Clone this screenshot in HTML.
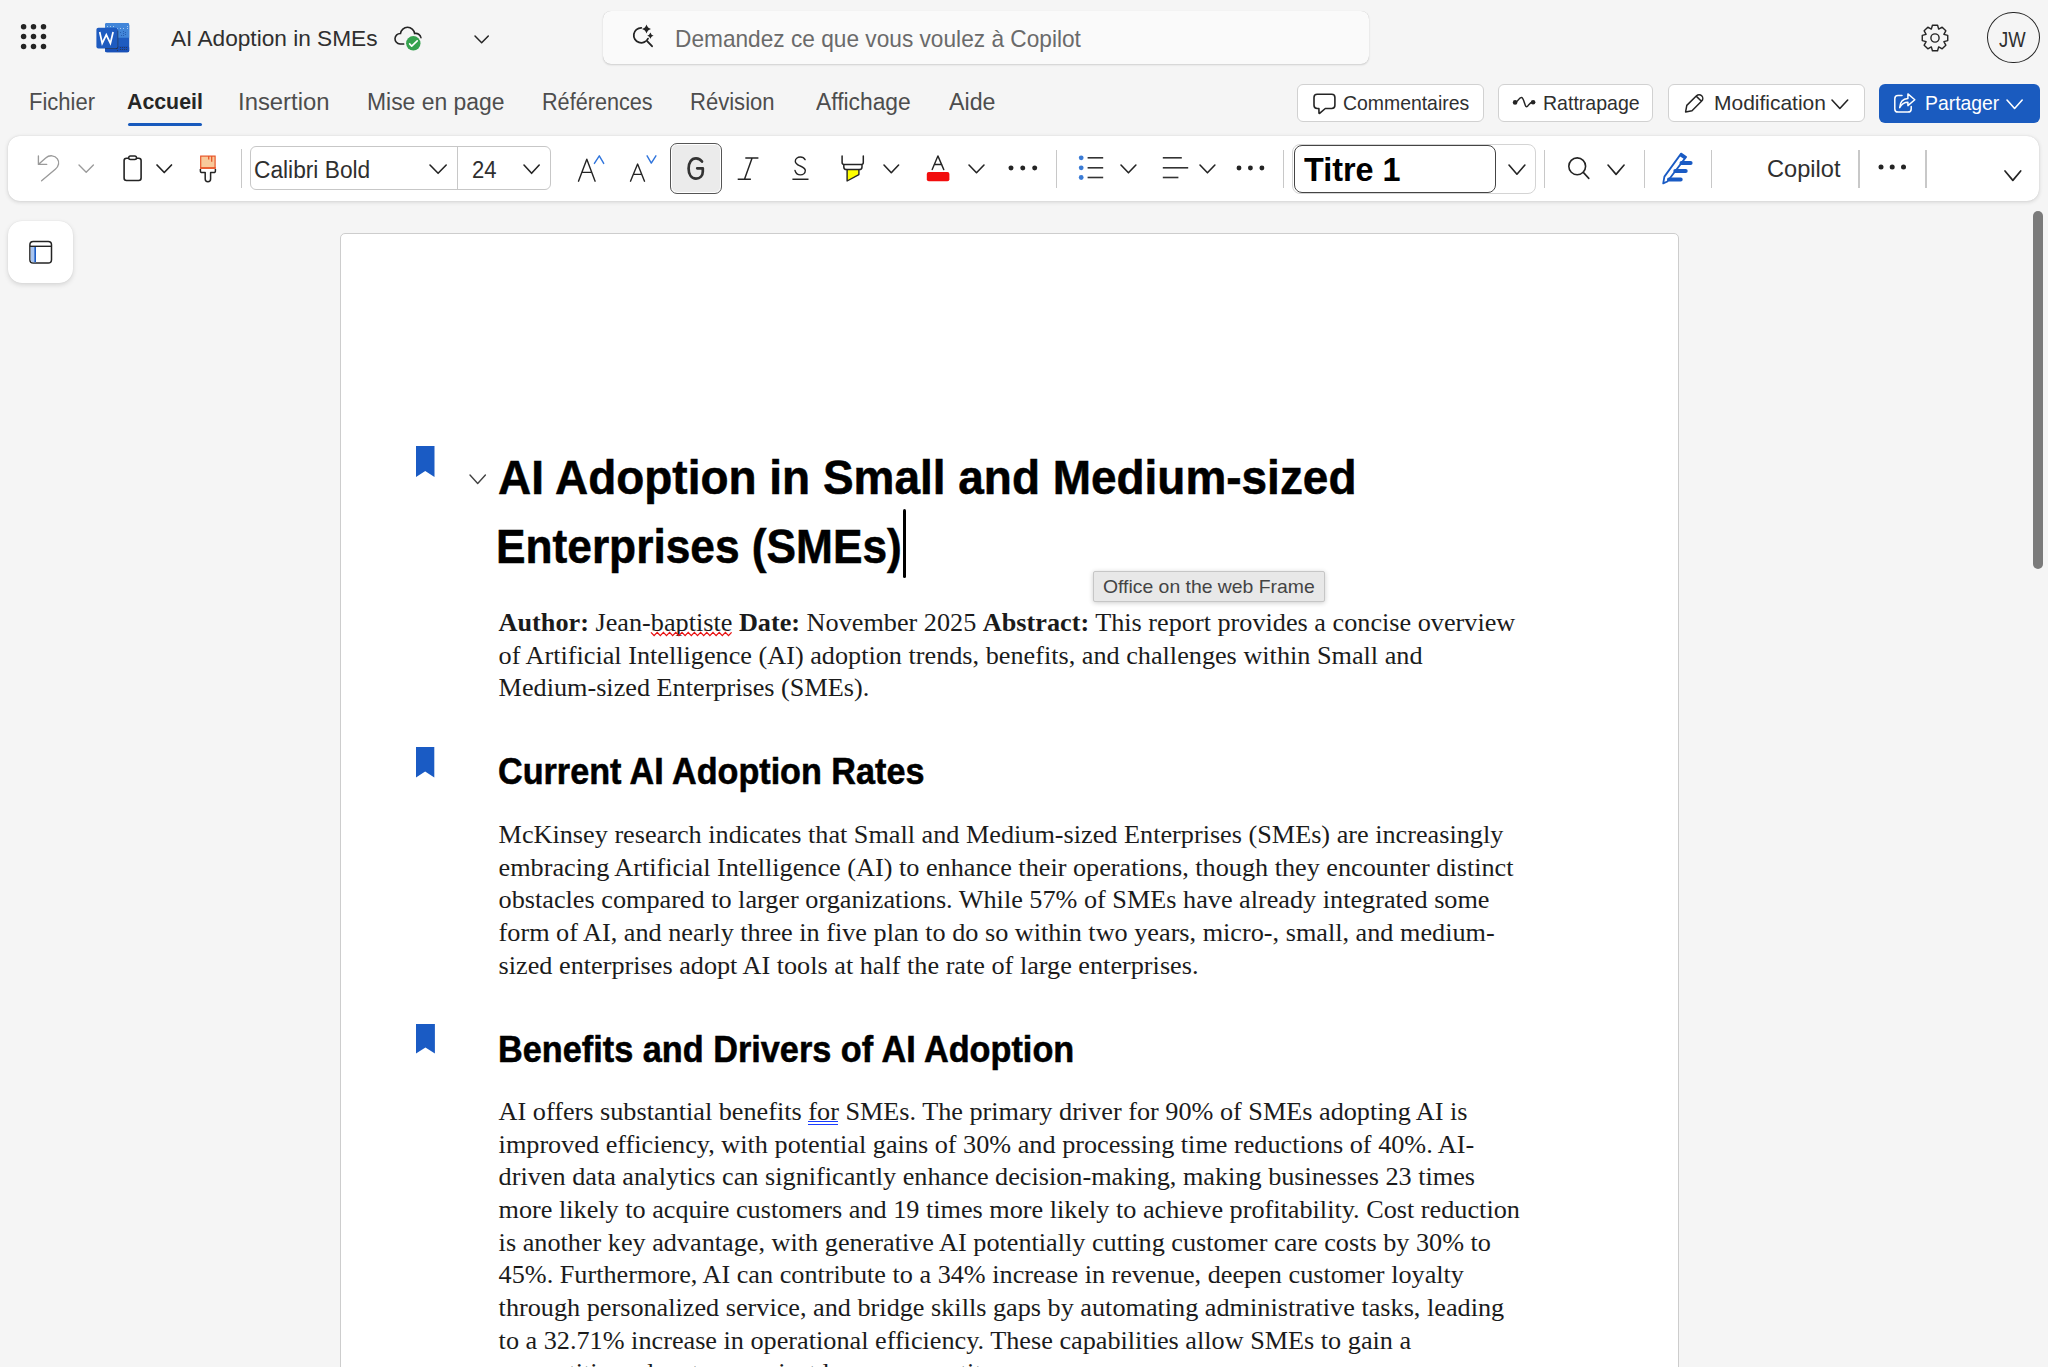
<!DOCTYPE html>
<html><head><meta charset="utf-8"><title>AI Adoption in SMEs</title>
<style>
html,body{margin:0;padding:0;}
body{width:2048px;height:1367px;overflow:hidden;position:relative;background:#f5f5f5;font-family:'Liberation Sans', sans-serif;}
.t{position:absolute;white-space:pre;}
.b{position:absolute;}
svg.b{overflow:visible;}
</style></head><body>
<svg class="b" style="left:15.00px;top:18.00px;" width="37" height="37" viewBox="0 0 37 37"><circle cx="8.6" cy="8.7" r="2.75" fill="#242424"/><circle cx="8.6" cy="18.6" r="2.75" fill="#242424"/><circle cx="8.6" cy="28.4" r="2.75" fill="#242424"/><circle cx="18.5" cy="8.7" r="2.75" fill="#242424"/><circle cx="18.5" cy="18.6" r="2.75" fill="#242424"/><circle cx="18.5" cy="28.4" r="2.75" fill="#242424"/><circle cx="28.5" cy="8.7" r="2.75" fill="#242424"/><circle cx="28.5" cy="18.6" r="2.75" fill="#242424"/><circle cx="28.5" cy="28.4" r="2.75" fill="#242424"/></svg>
<svg class="b" style="left:90.00px;top:15.00px;" width="45" height="45" viewBox="0 0 45 45">
<rect x="15" y="8.1" width="24.2" height="29.1" rx="2" fill="#1f5cc0"/>
<path d="M15 10.1 a2 2 0 0 1 2 -2 h20.2 a2 2 0 0 1 2 2 v12.6 h-24.2z" fill="#4286d9"/>
<rect x="15" y="31.3" width="24.2" height="5.9" rx="1.5" fill="#1850b8"/>
<g fill="#ffffff" opacity="0.75"><circle cx="17.5" cy="11.5" r="0.5"/><circle cx="20.5" cy="11.5" r="0.5"/><circle cx="23.5" cy="11.5" r="0.5"/><circle cx="27.5" cy="13.5" r="0.5"/><circle cx="30.5" cy="13.5" r="0.5"/><circle cx="33.5" cy="13.5" r="0.5"/><circle cx="37.5" cy="13.5" r="0.5"/><circle cx="37.5" cy="11.5" r="0.5"/></g>
<g fill="#1d4fa0" opacity="0.8"><circle cx="30.5" cy="17.5" r="0.55"/><circle cx="33.5" cy="16.5" r="0.55"/><circle cx="35.5" cy="17.5" r="0.55"/><circle cx="33.5" cy="18.5" r="0.55"/><circle cx="35.5" cy="19.5" r="0.55"/><circle cx="33.5" cy="20.5" r="0.55"/><circle cx="31.5" cy="20.5" r="0.55"/></g>
<g fill="#333" opacity="0.8"><circle cx="30.5" cy="32.5" r="0.55"/><circle cx="32.5" cy="32.5" r="0.55"/><circle cx="34.5" cy="32.5" r="0.55"/><circle cx="36.5" cy="32.5" r="0.55"/><circle cx="30.5" cy="34.5" r="0.55"/><circle cx="32.5" cy="34.5" r="0.55"/><circle cx="34.5" cy="34.5" r="0.55"/><circle cx="36.5" cy="34.5" r="0.55"/><circle cx="27.5" cy="35.5" r="0.55"/></g>
<path d="M27.6 15.5 V31.5 a2 2 0 0 1 -2 2 H15" fill="none" stroke="#2a2a2a" stroke-width="1.2"/>
<rect x="6.4" y="12.8" width="21.3" height="20.8" rx="2" fill="#1e5bc0"/>
<path d="M9.7 17 L12.2 28.3 L16.3 19.8 L20.4 28.3 L23.1 17" fill="none" stroke="#ffffff" stroke-width="1.7" stroke-linejoin="miter"/>
</svg>
<div class="t" style="left:171.20px;top:26.50px;font-family:'Liberation Sans', sans-serif;font-size:22.8px;line-height:22.8px;font-weight:400;color:#2f2f2f;transform:scaleX(0.99387);transform-origin:0 0;">AI Adoption in SMEs</div>
<svg class="b" style="left:385.00px;top:15.00px;" width="45" height="45" viewBox="0 0 45 45">
<path d="M18.8 29 H15 A5.1 5.1 0 0 1 15.5 18.5 A7.1 7.1 0 0 1 29.6 18.5 A5.2 5.2 0 0 1 35.9 22.7" fill="none" stroke="#242424" stroke-width="1.6" stroke-linecap="round"/>
<circle cx="28.3" cy="28.3" r="8.6" fill="#f5f5f5"/>
<circle cx="28.3" cy="28.3" r="7.2" fill="#35a24e"/>
<polyline points="24.6,28.9 26.7,31.1 32.2,25.8" fill="none" stroke="#fff" stroke-width="1.6" stroke-linecap="round" stroke-linejoin="round"/>
</svg>
<svg class="b" style="left:472.40px;top:32.70px;" width="19.3" height="12.7" viewBox="0 0 19.3 12.7"><polyline points="3,3 9.65,9.70 16.30,3" fill="none" stroke="#242424" stroke-width="1.5" stroke-linecap="round" stroke-linejoin="round"/></svg>
<div class="b" style="left:603.00px;top:11.00px;width:766.00px;height:52.50px;background:#fafafa;border-radius:8px;box-shadow:0 1px 2px rgba(0,0,0,0.16), 0 0 0.5px rgba(0,0,0,0.22);"></div>
<svg class="b" style="left:625.00px;top:18.00px;" width="40" height="37" viewBox="0 0 40 37">
<path d="M16.3 9.8 A7.5 7.5 0 1 0 23 20.6" fill="none" stroke="#242424" stroke-width="1.8" stroke-linecap="round"/>
<line x1="22.4" y1="23.3" x2="27" y2="28.2" stroke="#242424" stroke-width="1.9" stroke-linecap="round"/>
<path d="M21.50 6.60 Q22.49 10.11 26.00 11.10 Q22.49 12.09 21.50 15.60 Q20.51 12.09 17.00 11.10 Q20.51 10.11 21.50 6.60Z" fill="#242424"/>
<path d="M25.40 14.40 Q26.10 16.90 28.60 17.60 Q26.10 18.30 25.40 20.80 Q24.70 18.30 22.20 17.60 Q24.70 16.90 25.40 14.40Z" fill="#242424"/>
</svg>
<div class="t" style="left:674.80px;top:27.76px;font-family:'Liberation Sans', sans-serif;font-size:23.2px;line-height:23.2px;font-weight:400;color:#6a6a6a;transform:scaleX(0.97792);transform-origin:0 0;">Demandez ce que vous voulez à Copilot</div>
<svg class="b" style="left:1922.00px;top:24.50px;" width="26" height="26" viewBox="0 0 26 26"><path d="M9.35 4.12 L10.42 0.26 L15.58 0.26 L16.65 4.12 L16.70 4.14 L20.18 2.16 L23.84 5.82 L21.86 9.30 L21.88 9.35 L25.74 10.42 L25.74 15.58 L21.88 16.65 L21.86 16.70 L23.84 20.18 L20.18 23.84 L16.70 21.86 L16.65 21.88 L15.58 25.74 L10.42 25.74 L9.35 21.88 L9.30 21.86 L5.82 23.84 L2.16 20.18 L4.14 16.70 L4.12 16.65 L0.26 15.58 L0.26 10.42 L4.12 9.35 L4.14 9.30 L2.16 5.82 L5.82 2.16 L9.30 4.14Z" fill="none" stroke="#242424" stroke-width="1.4" stroke-linejoin="round"/><circle cx="13" cy="13" r="4.1" fill="none" stroke="#242424" stroke-width="1.4"/></svg>
<div class="b" style="left:1987.40px;top:11.60px;width:52.40px;height:51.60px;border:1.4px solid #242424;border-radius:50%;box-sizing:border-box;"></div>
<div class="t" style="left:1999.30px;top:29.60px;font-family:'Liberation Sans', sans-serif;font-size:21.5px;line-height:21.5px;font-weight:400;color:#2f2f2f;transform:scaleX(0.85740);transform-origin:0 0;">JW</div>
<div class="t" style="left:28.50px;top:90.73px;font-family:'Liberation Sans', sans-serif;font-size:23.0px;line-height:23.0px;font-weight:400;color:#4d4d4d;transform:scaleX(0.95569);transform-origin:0 0;">Fichier</div>
<div class="t" style="left:126.80px;top:91.07px;font-family:'Liberation Sans', sans-serif;font-size:22.6px;line-height:22.6px;font-weight:700;color:#262626;transform:scaleX(0.94359);transform-origin:0 0;">Accueil</div>
<div class="t" style="left:238.30px;top:90.73px;font-family:'Liberation Sans', sans-serif;font-size:23.0px;line-height:23.0px;font-weight:400;color:#4d4d4d;transform:scaleX(1.03741);transform-origin:0 0;">Insertion</div>
<div class="t" style="left:367.00px;top:90.73px;font-family:'Liberation Sans', sans-serif;font-size:23.0px;line-height:23.0px;font-weight:400;color:#4d4d4d;transform:scaleX(0.99567);transform-origin:0 0;">Mise en page</div>
<div class="t" style="left:541.90px;top:90.73px;font-family:'Liberation Sans', sans-serif;font-size:23.0px;line-height:23.0px;font-weight:400;color:#4d4d4d;transform:scaleX(0.94069);transform-origin:0 0;">Références</div>
<div class="t" style="left:690.30px;top:90.73px;font-family:'Liberation Sans', sans-serif;font-size:23.0px;line-height:23.0px;font-weight:400;color:#4d4d4d;transform:scaleX(0.95875);transform-origin:0 0;">Révision</div>
<div class="t" style="left:815.70px;top:90.73px;font-family:'Liberation Sans', sans-serif;font-size:23.0px;line-height:23.0px;font-weight:400;color:#4d4d4d;transform:scaleX(0.99233);transform-origin:0 0;">Affichage</div>
<div class="t" style="left:948.80px;top:90.73px;font-family:'Liberation Sans', sans-serif;font-size:23.0px;line-height:23.0px;font-weight:400;color:#4d4d4d;transform:scaleX(1.00869);transform-origin:0 0;">Aide</div>
<div class="b" style="left:128.20px;top:123.00px;width:73.80px;height:3.00px;background:#185abd;border-radius:2px;"></div>
<div class="b" style="left:1296.50px;top:84.00px;width:187.00px;height:38.00px;background:#fff;border:1px solid #d1d1d1;border-radius:6px;box-sizing:border-box;"></div>
<svg class="b" style="left:1305.00px;top:88.00px;" width="40" height="32" viewBox="0 0 40 32"><path d="M13.9 20.5 H12.2 A3.2 3.2 0 0 1 9 17.3 V9.4 A3.2 3.2 0 0 1 12.2 6.2 H26.7 A3.2 3.2 0 0 1 29.9 9.4 V17.3 A3.2 3.2 0 0 1 26.7 20.5 H20.3 L14.6 25.3 Q14 25.6 14 25 Z" fill="none" stroke="#242424" stroke-width="1.6" stroke-linejoin="round"/></svg>
<div class="t" style="left:1343.20px;top:94.44px;font-family:'Liberation Sans', sans-serif;font-size:19.8px;line-height:19.8px;font-weight:400;color:#2f2f2f;transform:scaleX(0.98106);transform-origin:0 0;">Commentaires</div>
<div class="b" style="left:1497.80px;top:84.00px;width:155.30px;height:38.00px;background:#fff;border:1px solid #d1d1d1;border-radius:6px;box-sizing:border-box;"></div>
<svg class="b" style="left:1505.00px;top:88.00px;" width="40" height="32" viewBox="0 0 40 32"><path d="M10.1 14.4 C13 14.4 13.6 9.4 16.4 9.4 C19.3 9.4 19.3 18.7 21.6 18.7 C23.6 18.7 23.5 14.3 28.1 14.3" fill="none" stroke="#242424" stroke-width="1.5" stroke-linecap="round"/><circle cx="10.1" cy="14.4" r="2.3" fill="#242424"/><circle cx="28.1" cy="14.3" r="2.3" fill="#242424"/></svg>
<div class="t" style="left:1543.30px;top:94.44px;font-family:'Liberation Sans', sans-serif;font-size:19.8px;line-height:19.8px;font-weight:400;color:#2f2f2f;transform:scaleX(0.98736);transform-origin:0 0;">Rattrapage</div>
<div class="b" style="left:1668.00px;top:84.00px;width:196.60px;height:38.00px;background:#fff;border:1px solid #d1d1d1;border-radius:6px;box-sizing:border-box;"></div>
<svg class="b" style="left:1678.00px;top:88.00px;" width="34" height="32" viewBox="0 0 34 32"><path d="M7.6 23.9 L8.8 17.4 L18.5 7.8 A3.65 3.65 0 0 1 23.7 13 L14 22.7 Z M18.2 8.1 L23.4 13.3" fill="none" stroke="#242424" stroke-width="1.5" stroke-linejoin="round"/></svg>
<div class="t" style="left:1713.70px;top:94.44px;font-family:'Liberation Sans', sans-serif;font-size:19.8px;line-height:19.8px;font-weight:400;color:#2f2f2f;transform:scaleX(1.06038);transform-origin:0 0;">Modification</div>
<svg class="b" style="left:1828.50px;top:96.80px;" width="21.7" height="14.5" viewBox="0 0 21.7 14.5"><polyline points="3,3 10.85,11.50 18.70,3" fill="none" stroke="#242424" stroke-width="1.6" stroke-linecap="round" stroke-linejoin="round"/></svg>
<div class="b" style="left:1878.80px;top:83.70px;width:161.10px;height:39.20px;background:#1a5bbf;border-radius:6px;"></div>
<svg class="b" style="left:1888.00px;top:88.00px;" width="34" height="32" viewBox="0 0 34 32"><path d="M14 7.5 H10 A3.2 3.2 0 0 0 6.8 10.7 V20.9 A3.2 3.2 0 0 0 10 24.1 H20 A3.2 3.2 0 0 0 23.2 20.9 V18.6" fill="none" stroke="#fff" stroke-width="1.5" stroke-linecap="round"/><path d="M11.7 19.6 C12 14.2 15 11 19.9 10.6 V5.9 L26.8 11.8 L19.9 17.6 V14.2 C16.2 14.2 13.6 16 11.7 19.6 Z" fill="none" stroke="#fff" stroke-width="1.5" stroke-linejoin="round"/></svg>
<div class="t" style="left:1925.20px;top:94.44px;font-family:'Liberation Sans', sans-serif;font-size:19.8px;line-height:19.8px;font-weight:400;color:#ffffff;transform:scaleX(0.97941);transform-origin:0 0;">Partager</div>
<svg class="b" style="left:2003.70px;top:96.80px;" width="21.2" height="14.5" viewBox="0 0 21.2 14.5"><polyline points="3,3 10.60,11.50 18.20,3" fill="none" stroke="#ffffff" stroke-width="1.6" stroke-linecap="round" stroke-linejoin="round"/></svg>
<div class="b" style="left:8.00px;top:136.00px;width:2031.00px;height:65.00px;background:#fff;border-radius:12px;box-shadow:0 1px 4px rgba(0,0,0,0.15), 0 0 1px rgba(0,0,0,0.14);"></div>
<svg class="b" style="left:30.00px;top:148.00px;" width="40" height="42" viewBox="0 0 40 42"><path d="M8.4 7.9 V16.4 H16.7 M8.6 16.2 L15.7 9.9 C19.5 6.6 24.8 7.3 27.4 10.8 C29.7 14 28.8 18.6 25.3 21.3 L11.6 32.8" fill="none" stroke="#9a9a9a" stroke-width="1.35" stroke-linecap="round" stroke-linejoin="round"/></svg>
<svg class="b" style="left:75.50px;top:162.40px;" width="20.4" height="13.2" viewBox="0 0 20.4 13.2"><polyline points="3,3 10.20,10.20 17.40,3" fill="none" stroke="#9a9a9a" stroke-width="1.35" stroke-linecap="round" stroke-linejoin="round"/></svg>
<svg class="b" style="left:115.00px;top:148.00px;" width="40" height="42" viewBox="0 0 40 42"><rect x="9.1" y="10.2" width="17" height="22.3" rx="2.4" fill="none" stroke="#242424" stroke-width="1.6"/><rect x="13.7" y="7.9" width="7.8" height="3.5" rx="1.75" fill="#fff" stroke="#242424" stroke-width="1.5"/></svg>
<svg class="b" style="left:154.20px;top:162.20px;" width="20.5" height="13.5" viewBox="0 0 20.5 13.5"><polyline points="3,3 10.25,10.50 17.50,3" fill="none" stroke="#242424" stroke-width="1.7" stroke-linecap="round" stroke-linejoin="round"/></svg>
<svg class="b" style="left:115.00px;top:148.00px;" width="110" height="42" viewBox="0 0 110 42">
<rect x="85.7" y="8.1" width="14.4" height="12" fill="#f8c99a" stroke="#e8572a" stroke-width="1.2"/>
<rect x="85.1" y="19.2" width="15.6" height="1.6" fill="#e8572a"/>
<path d="M93.7 8 V11.5 M96.7 8 V13.7" stroke="#e8572a" stroke-width="1.3"/>
<path d="M85.4 21 V22.9 Q85.4 24.6 87.2 24.6 H90.2 V31 A2.7 2.7 0 0 0 95.6 31 V24.6 H98.6 Q100.4 24.6 100.4 22.9 V21" fill="#fff" stroke="#242424" stroke-width="1.5" stroke-linejoin="round"/>
</svg>
<div class="b" style="left:240.90px;top:149.00px;width:1.20px;height:39.00px;background:#c8c8c8;"></div>
<div class="b" style="left:249.70px;top:146.30px;width:301.30px;height:44.20px;border:1px solid #c7c7c7;border-radius:6px;box-sizing:border-box;"></div>
<div class="b" style="left:456.60px;top:147.00px;width:1.20px;height:43.00px;background:#c8c8c8;"></div>
<div class="t" style="left:253.60px;top:158.67px;font-family:'Liberation Sans', sans-serif;font-size:23.3px;line-height:23.3px;font-weight:400;color:#2f2f2f;transform:scaleX(0.97567);transform-origin:0 0;">Calibri Bold</div>
<svg class="b" style="left:426.80px;top:162.00px;" width="22.2" height="14.3" viewBox="0 0 22.2 14.3"><polyline points="3,3 11.10,11.30 19.20,3" fill="none" stroke="#242424" stroke-width="1.6" stroke-linecap="round" stroke-linejoin="round"/></svg>
<div class="t" style="left:471.70px;top:158.67px;font-family:'Liberation Sans', sans-serif;font-size:23.3px;line-height:23.3px;font-weight:400;color:#2f2f2f;transform:scaleX(0.94602);transform-origin:0 0;">24</div>
<svg class="b" style="left:520.60px;top:162.00px;" width="21.2" height="14.3" viewBox="0 0 21.2 14.3"><polyline points="3,3 10.60,11.30 18.20,3" fill="none" stroke="#242424" stroke-width="1.6" stroke-linecap="round" stroke-linejoin="round"/></svg>
<svg class="b" style="left:570.00px;top:148.00px;" width="100" height="42" viewBox="0 0 100 42"><path d="M8.5 33.2 L16.8 11.2 L25.1 33.2 M12 24.4 H21.6" fill="none" stroke="#242424" stroke-width="1.4" stroke-linecap="round" stroke-linejoin="round"/>
<polyline points="24.4,15.4 29.3,7.8 33.7,15.4" fill="none" stroke="#2f74dc" stroke-width="1.4" stroke-linecap="round" stroke-linejoin="round"/>
<path d="M60.5 33.2 L67.6 16.1 L74.5 33.2 M63.3 26.4 H71.8" fill="none" stroke="#242424" stroke-width="1.4" stroke-linecap="round" stroke-linejoin="round"/>
<polyline points="77.1,7.8 81.3,15.1 85.9,7.8" fill="none" stroke="#2f74dc" stroke-width="1.4" stroke-linecap="round" stroke-linejoin="round"/></svg>
<div class="b" style="left:670.20px;top:142.80px;width:51.50px;height:51.50px;background:#ebebeb;border:1.7px solid #555;border-radius:7px;box-sizing:border-box;box-shadow:inset 0 0 0 1px #fff;"></div>
<svg class="b" style="left:660.00px;top:138.00px;" width="70" height="62" viewBox="0 0 70 62"><path d="M42 23.6 C40.5 21.4 38.5 20.4 36 20.4 C31.4 20.4 28.6 24.5 28.6 30.5 C28.6 36.5 31.4 40.6 36 40.6 C40.1 40.6 42.8 37.6 42.8 33.5 V30.3 H37.2" fill="none" stroke="#333" stroke-width="2.7" stroke-linecap="round" stroke-linejoin="round"/></svg>
<svg class="b" style="left:725.00px;top:148.00px;" width="100" height="42" viewBox="0 0 100 42"><path d="M20.3 10 H33.4 M12.7 31.25 H25.9 M27.1 10 L19.5 31.25" fill="none" stroke="#242424" stroke-width="1.45" stroke-linecap="butt"/>
<path d="M80.1 11.7 C79 9.7 77.5 9 75.4 9 C72.5 9 70.3 10.8 70.3 13.2 C70.3 16 73 17 75.3 18 C78 19.2 80.3 20.3 80.3 22.5 C80.3 25.2 78 26.9 75.4 26.9 C72.7 26.9 70.8 25.2 70 22.5" fill="none" stroke="#242424" stroke-width="1.4" stroke-linecap="round"/>
<line x1="67.4" y1="31.25" x2="83.5" y2="31.25" stroke="#242424" stroke-width="1.45"/></svg>
<svg class="b" style="left:830.00px;top:148.00px;" width="130" height="42" viewBox="0 0 130 42"><path d="M12.1 7.9 V14.5 Q12.1 16.5 14.1 16.5 H31.3 Q33.3 16.5 33.3 14.5 V7.9" fill="none" stroke="#242424" stroke-width="1.5" stroke-linecap="round"/>
<path d="M13.8 16.5 V19 Q13.8 21.6 16.6 21.6 H29.2 Q32 21.6 32 19 V16.5" fill="none" stroke="#242424" stroke-width="1.5"/>
<path d="M17.1 21.6 H28.9 V26.6 L17.1 33 Z" fill="#ffff00" stroke="#242424" stroke-width="1.4" stroke-linejoin="round"/>
<path d="M102.2 21.6 L107.9 7.9 L113.8 21.6 M104.2 16.5 H111.8" fill="none" stroke="#242424" stroke-width="1.4" stroke-linecap="round" stroke-linejoin="round"/>
<rect x="96.8" y="24.1" width="22.6" height="9.2" rx="2" fill="#f20d0d"/></svg>
<svg class="b" style="left:881.00px;top:162.10px;" width="20.6" height="13.7" viewBox="0 0 20.6 13.7"><polyline points="3,3 10.30,10.70 17.60,3" fill="none" stroke="#242424" stroke-width="1.6" stroke-linecap="round" stroke-linejoin="round"/></svg>
<svg class="b" style="left:965.60px;top:162.10px;" width="21.0" height="13.7" viewBox="0 0 21.0 13.7"><polyline points="3,3 10.50,10.70 18.00,3" fill="none" stroke="#242424" stroke-width="1.6" stroke-linecap="round" stroke-linejoin="round"/></svg>
<svg class="b" style="left:1006.50px;top:164.00px;" width="31.7" height="8" viewBox="0 0 31.7 8"><circle cx="4.00" cy="4" r="2.5" fill="#242424"/><circle cx="15.80" cy="4" r="2.5" fill="#242424"/><circle cx="27.70" cy="4" r="2.5" fill="#242424"/></svg>
<div class="b" style="left:1056.20px;top:149.50px;width:1.20px;height:38.00px;background:#c8c8c8;"></div>
<svg class="b" style="left:1070.00px;top:148.00px;" width="200" height="42" viewBox="0 0 200 42"><circle cx="11.2" cy="9.8" r="2.4" fill="#3a7bd5"/><line x1="17.6" y1="9.8" x2="33.2" y2="9.8" stroke="#333" stroke-width="1.6"/><circle cx="11.2" cy="19.8" r="2.4" fill="#3a7bd5"/><line x1="17.6" y1="19.8" x2="33.2" y2="19.8" stroke="#333" stroke-width="1.6"/><circle cx="11.2" cy="29.5" r="2.4" fill="#3a7bd5"/><line x1="17.6" y1="29.5" x2="33.2" y2="29.5" stroke="#333" stroke-width="1.6"/><line x1="92.8" y1="9.8" x2="111.8" y2="9.8" stroke="#333" stroke-width="1.6"/><line x1="92.8" y1="19.8" x2="118.2" y2="19.8" stroke="#333" stroke-width="1.6"/><line x1="92.8" y1="29.5" x2="108.4" y2="29.5" stroke="#333" stroke-width="1.6"/></svg>
<svg class="b" style="left:1118.30px;top:162.10px;" width="20.9" height="13.8" viewBox="0 0 20.9 13.8"><polyline points="3,3 10.45,10.80 17.90,3" fill="none" stroke="#242424" stroke-width="1.6" stroke-linecap="round" stroke-linejoin="round"/></svg>
<svg class="b" style="left:1196.90px;top:162.10px;" width="20.9" height="13.8" viewBox="0 0 20.9 13.8"><polyline points="3,3 10.45,10.80 17.90,3" fill="none" stroke="#242424" stroke-width="1.6" stroke-linecap="round" stroke-linejoin="round"/></svg>
<svg class="b" style="left:1234.50px;top:163.80px;" width="30.9" height="8" viewBox="0 0 30.9 8"><circle cx="4.00" cy="4" r="2.45" fill="#242424"/><circle cx="15.40" cy="4" r="2.45" fill="#242424"/><circle cx="26.90" cy="4" r="2.45" fill="#242424"/></svg>
<div class="b" style="left:1283.30px;top:149.50px;width:1.20px;height:38.00px;background:#c8c8c8;"></div>
<div class="b" style="left:1292.20px;top:143.50px;width:244.10px;height:50.10px;border:1px solid #d4d4d4;border-radius:8px;box-sizing:border-box;"></div>
<div class="b" style="left:1293.60px;top:144.60px;width:202.00px;height:48.30px;border:1.6px solid #444;border-radius:8px;box-sizing:border-box;background:#fff;"></div>
<div class="t" style="left:1304.10px;top:153.88px;font-family:'Liberation Sans', sans-serif;font-size:32.5px;line-height:32.5px;font-weight:700;color:#000;transform:scaleX(0.99614);transform-origin:0 0;">Titre 1</div>
<svg class="b" style="left:1506.00px;top:161.80px;" width="21.9" height="15.2" viewBox="0 0 21.9 15.2"><polyline points="3,3 10.95,12.20 18.90,3" fill="none" stroke="#242424" stroke-width="1.6" stroke-linecap="round" stroke-linejoin="round"/></svg>
<div class="b" style="left:1543.80px;top:149.50px;width:1.20px;height:38.00px;background:#c8c8c8;"></div>
<svg class="b" style="left:1540.00px;top:135.00px;" width="100" height="60" viewBox="0 0 100 60"><circle cx="37.2" cy="31.3" r="8.4" fill="none" stroke="#242424" stroke-width="1.6"/><line x1="43.3" y1="37.4" x2="48.8" y2="43.4" stroke="#242424" stroke-width="1.6" stroke-linecap="round"/></svg>
<svg class="b" style="left:1605.20px;top:161.80px;" width="22.1" height="15.4" viewBox="0 0 22.1 15.4"><polyline points="3,3 11.05,12.40 19.10,3" fill="none" stroke="#242424" stroke-width="1.6" stroke-linecap="round" stroke-linejoin="round"/></svg>
<div class="b" style="left:1644.10px;top:149.50px;width:1.20px;height:38.00px;background:#c8c8c8;"></div>
<svg class="b" style="left:1650.00px;top:145.00px;" width="50" height="47" viewBox="0 0 50 47"><path d="M13.2 38.3 L14.4 31.6 L31.1 8.6 L36.1 11.9 L17.4 36.5 Z" fill="#fff" stroke="#1a5bc4" stroke-width="1.8" stroke-linejoin="round"/>
<path d="M31.1 8.6 L36.1 11.9 L34.4 14.2 L29.4 10.9 Z" fill="#1a5bc4"/>
<path d="M31.5 17.9 H40.6 M25.3 26.1 H35.7 M19 34.4 H30.7" stroke="#1a5bc4" stroke-width="4" stroke-linecap="round"/></svg>
<div class="b" style="left:1711.10px;top:149.50px;width:1.20px;height:38.00px;background:#c8c8c8;"></div>
<div class="t" style="left:1767.30px;top:157.96px;font-family:'Liberation Sans', sans-serif;font-size:23.2px;line-height:23.2px;font-weight:400;color:#2f2f2f;transform:scaleX(1.01762);transform-origin:0 0;">Copilot</div>
<div class="b" style="left:1858.40px;top:149.50px;width:1.20px;height:38.00px;background:#c8c8c8;"></div>
<svg class="b" style="left:1876.50px;top:163.30px;" width="30.5" height="8" viewBox="0 0 30.5 8"><circle cx="4.00" cy="4" r="2.5" fill="#242424"/><circle cx="15.20" cy="4" r="2.5" fill="#242424"/><circle cx="26.50" cy="4" r="2.5" fill="#242424"/></svg>
<div class="b" style="left:1925.40px;top:149.50px;width:1.20px;height:38.00px;background:#c8c8c8;"></div>
<svg class="b" style="left:2002.10px;top:168.00px;" width="21.7" height="15.4" viewBox="0 0 21.7 15.4"><polyline points="3,3 10.85,12.40 18.70,3" fill="none" stroke="#242424" stroke-width="1.7" stroke-linecap="round" stroke-linejoin="round"/></svg>
<div class="b" style="left:8.40px;top:221.00px;width:65.10px;height:62.00px;background:#fff;border-radius:14px;box-shadow:0 2px 5px rgba(0,0,0,0.13), 0 0 1px rgba(0,0,0,0.12);"></div>
<svg class="b" style="left:20.00px;top:230.00px;" width="45" height="45" viewBox="0 0 45 45"><rect x="9.9" y="11.4" width="21.6" height="21.6" rx="3.3" fill="none" stroke="#242424" stroke-width="1.5"/><line x1="9.9" y1="16.3" x2="31.5" y2="16.3" stroke="#242424" stroke-width="1.4"/><path d="M10.7 17 H15.9 V32.2 H13.3 A2.6 2.6 0 0 1 10.7 29.6 Z" fill="#a8c4ef"/><line x1="15.2" y1="17" x2="15.2" y2="32.3" stroke="#1a5bc4" stroke-width="1.6"/></svg>
<div class="b" style="left:340.40px;top:232.90px;width:1338.20px;height:1187.10px;background:#fff;border:1px solid #cdcdcd;border-radius:5px;box-sizing:border-box;"></div>
<div class="b" style="left:2033.30px;top:211.00px;width:9.70px;height:358.30px;background:#7b7b7b;border-radius:5px;"></div>
<svg class="b" style="left:415.50px;top:445.50px;" width="18.5" height="30.9" viewBox="0 0 18.5 30.9"><path d="M0 0 H18.50 V30.90 L9.25 24.90 L0 30.90z" fill="#1a5bc4"/></svg>
<svg class="b" style="left:416.00px;top:747.00px;" width="18.3" height="30.5" viewBox="0 0 18.3 30.5"><path d="M0 0 H18.30 V30.50 L9.15 24.50 L0 30.50z" fill="#1a5bc4"/></svg>
<svg class="b" style="left:415.60px;top:1023.90px;" width="18.9" height="29.5" viewBox="0 0 18.9 29.5"><path d="M0 0 H18.90 V29.50 L9.45 23.50 L0 29.50z" fill="#1a5bc4"/></svg>
<svg class="b" style="left:467.30px;top:472.00px;" width="21.4" height="14.5" viewBox="0 0 21.4 14.5"><polyline points="3,3 10.70,11.50 18.40,3" fill="none" stroke="#424242" stroke-width="1.4" stroke-linecap="round" stroke-linejoin="round"/></svg>
<div class="t" style="left:497.80px;top:453.08px;font-family:'Liberation Sans', sans-serif;font-size:48.8px;line-height:48.8px;font-weight:700;color:#000000;transform:scaleX(0.94152);transform-origin:0 0;-webkit-text-stroke:0.55px #000;">AI Adoption in Small and Medium-sized</div>
<div class="t" style="left:496.00px;top:521.58px;font-family:'Liberation Sans', sans-serif;font-size:48.8px;line-height:48.8px;font-weight:700;color:#000000;transform:scaleX(0.90693);transform-origin:0 0;-webkit-text-stroke:0.55px #000;">Enterprises (SMEs)</div>
<div class="b" style="left:903.00px;top:509.20px;width:3.00px;height:68.50px;background:#000;border-radius:1.5px;"></div>
<div class="t" style="left:498.40px;top:753.78px;font-family:'Liberation Sans', sans-serif;font-size:36.4px;line-height:36.4px;font-weight:700;color:#000000;transform:scaleX(0.93877);transform-origin:0 0;-webkit-text-stroke:0.55px #000;">Current AI Adoption Rates</div>
<div class="t" style="left:497.50px;top:1031.78px;font-family:'Liberation Sans', sans-serif;font-size:36.4px;line-height:36.4px;font-weight:700;color:#000000;transform:scaleX(0.94167);transform-origin:0 0;-webkit-text-stroke:0.55px #000;">Benefits and Drivers of AI Adoption</div>
<div class="b" style="left:1092.90px;top:570.80px;width:231.70px;height:31.70px;background:#e8e8e8;border:1px solid #c6c6c6;border-radius:2px;box-sizing:border-box;box-shadow:0 1px 5px rgba(0,0,0,0.2);"></div>
<div class="t" style="left:1102.90px;top:577.54px;font-family:'Liberation Sans', sans-serif;font-size:18.5px;line-height:18.5px;font-weight:400;color:#444444;transform:scaleX(1.04700);transform-origin:0 0;">Office on the web Frame</div>
<div class="t" style="left:498.60px;top:609.74px;font-family:'Liberation Serif', serif;font-size:26.22px;line-height:26.22px;font-weight:400;color:#1b1b1b;"><b>Author:</b> Jean-baptiste <b>Date:</b> November 2025 <b>Abstract:</b> This report provides a concise overview</div>
<div class="t" style="left:498.60px;top:642.54px;font-family:'Liberation Serif', serif;font-size:26.22px;line-height:26.22px;font-weight:400;color:#1b1b1b;">of Artificial Intelligence (AI) adoption trends, benefits, and challenges within Small and</div>
<div class="t" style="left:498.60px;top:675.34px;font-family:'Liberation Serif', serif;font-size:26.22px;line-height:26.22px;font-weight:400;color:#1b1b1b;">Medium-sized Enterprises (SMEs).</div>
<svg class="b" style="left:650.90px;top:632.00px;" width="82" height="5" viewBox="0 0 82 5"><path d="M0.00 0.40 L3.10 3.60 L6.20 0.40 L9.30 3.60 L12.40 0.40 L15.50 3.60 L18.60 0.40 L21.70 3.60 L24.80 0.40 L27.90 3.60 L31.00 0.40 L34.10 3.60 L37.20 0.40 L40.30 3.60 L43.40 0.40 L46.50 3.60 L49.60 0.40 L52.70 3.60 L55.80 0.40 L58.90 3.60 L62.00 0.40 L65.10 3.60 L68.20 0.40 L71.30 3.60 L74.40 0.40 L77.50 3.60 L80.60 0.40" fill="none" stroke="#e81010" stroke-width="1.35"/></svg>
<div class="t" style="left:498.60px;top:821.94px;font-family:'Liberation Serif', serif;font-size:26.22px;line-height:26.22px;font-weight:400;color:#1b1b1b;">McKinsey research indicates that Small and Medium-sized Enterprises (SMEs) are increasingly</div>
<div class="t" style="left:498.60px;top:854.64px;font-family:'Liberation Serif', serif;font-size:26.22px;line-height:26.22px;font-weight:400;color:#1b1b1b;">embracing Artificial Intelligence (AI) to enhance their operations, though they encounter distinct</div>
<div class="t" style="left:498.60px;top:887.34px;font-family:'Liberation Serif', serif;font-size:26.22px;line-height:26.22px;font-weight:400;color:#1b1b1b;">obstacles compared to larger organizations. While 57% of SMEs have already integrated some</div>
<div class="t" style="left:498.60px;top:920.04px;font-family:'Liberation Serif', serif;font-size:26.22px;line-height:26.22px;font-weight:400;color:#1b1b1b;">form of AI, and nearly three in five plan to do so within two years, micro-, small, and medium-</div>
<div class="t" style="left:498.60px;top:952.74px;font-family:'Liberation Serif', serif;font-size:26.22px;line-height:26.22px;font-weight:400;color:#1b1b1b;">sized enterprises adopt AI tools at half the rate of large enterprises.</div>
<div class="t" style="left:498.60px;top:1098.84px;font-family:'Liberation Serif', serif;font-size:26.22px;line-height:26.22px;font-weight:400;color:#1b1b1b;">AI offers substantial benefits for SMEs. The primary driver for 90% of SMEs adopting AI is</div>
<div class="t" style="left:498.60px;top:1131.54px;font-family:'Liberation Serif', serif;font-size:26.22px;line-height:26.22px;font-weight:400;color:#1b1b1b;">improved efficiency, with potential gains of 30% and processing time reductions of 40%. AI-</div>
<div class="t" style="left:498.60px;top:1164.24px;font-family:'Liberation Serif', serif;font-size:26.22px;line-height:26.22px;font-weight:400;color:#1b1b1b;">driven data analytics can significantly enhance decision-making, making businesses 23 times</div>
<div class="t" style="left:498.60px;top:1196.94px;font-family:'Liberation Serif', serif;font-size:26.22px;line-height:26.22px;font-weight:400;color:#1b1b1b;">more likely to acquire customers and 19 times more likely to achieve profitability. Cost reduction</div>
<div class="t" style="left:498.60px;top:1229.64px;font-family:'Liberation Serif', serif;font-size:26.22px;line-height:26.22px;font-weight:400;color:#1b1b1b;">is another key advantage, with generative AI potentially cutting customer care costs by 30% to</div>
<div class="t" style="left:498.60px;top:1262.34px;font-family:'Liberation Serif', serif;font-size:26.22px;line-height:26.22px;font-weight:400;color:#1b1b1b;">45%. Furthermore, AI can contribute to a 34% increase in revenue, deepen customer loyalty</div>
<div class="t" style="left:498.60px;top:1295.04px;font-family:'Liberation Serif', serif;font-size:26.22px;line-height:26.22px;font-weight:400;color:#1b1b1b;">through personalized service, and bridge skills gaps by automating administrative tasks, leading</div>
<div class="t" style="left:498.60px;top:1327.74px;font-family:'Liberation Serif', serif;font-size:26.22px;line-height:26.22px;font-weight:400;color:#1b1b1b;">to a 32.71% increase in operational efficiency. These capabilities allow SMEs to gain a</div>
<div class="t" style="left:498.60px;top:1360.44px;font-family:'Liberation Serif', serif;font-size:26.22px;line-height:26.22px;font-weight:400;color:#1b1b1b;">competitive advantage against larger competitors.</div>
<div class="b" style="left:808.10px;top:1120.60px;width:30.00px;height:1.60px;background:#1a3cff;"></div>
<div class="b" style="left:808.10px;top:1123.90px;width:30.00px;height:1.60px;background:#1a3cff;"></div>
</body></html>
